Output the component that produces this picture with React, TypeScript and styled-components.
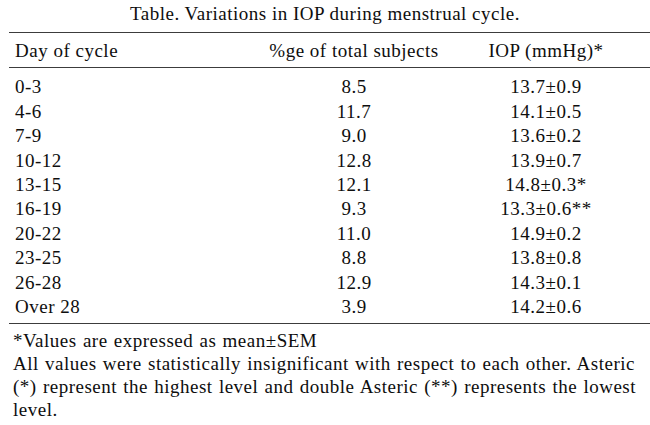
import React from "react";
import styled, { createGlobalStyle } from "styled-components";

const GlobalStyle = createGlobalStyle`
  html, body {
    margin: 0;
    padding: 0;
    background: #ffffff;
  }
  body {
    font-family: "Liberation Serif", "Times New Roman", serif;
    color: #0e0e0e;
  }
`;

const Page = styled.div`
  width: 650px;
  height: 425px;
  overflow: hidden;
  padding-top: 3px;
  box-sizing: border-box;
  font-size: 19px;
  letter-spacing: 0.5px;
`;

const Title = styled.div`
  text-align: center;
  line-height: 22px;
  height: 22px;
  white-space: nowrap;
`;

const Table = styled.div`
  margin-left: 9px;
  margin-top: 7px;
`;

const Grid = styled.div`
  display: grid;
  grid-template-columns: 245px 188px 196px;
  padding-left: 6px;
  line-height: 24.4px;
  white-space: nowrap;
`;

const HeadRow = styled(Grid)`
  border-top: 1.5px solid #3c3c3c;
  border-bottom: 1.5px solid #3c3c3c;
  padding-top: 6px;
  padding-bottom: 4px;
`;

const Body = styled.div`
  padding-top: 7px;
  padding-bottom: 4px;
  border-bottom: 1.5px solid #3c3c3c;
`;

const Cell = styled.div<{ $align?: "left" | "center" }>`
  text-align: ${(p) => p.$align ?? "left"};
`;

const Notes = styled.div`
  padding-left: 13px;
  padding-top: 6px;
  line-height: 22.7px;
  word-spacing: 1px;
`;

const NoteLine = styled.div`
  white-space: nowrap;
`;

const rows: [string, string, string][] = [
  ["0-3", "8.5", "13.7±0.9"],
  ["4-6", "11.7", "14.1±0.5"],
  ["7-9", "9.0", "13.6±0.2"],
  ["10-12", "12.8", "13.9±0.7"],
  ["13-15", "12.1", "14.8±0.3*"],
  ["16-19", "9.3", "13.3±0.6**"],
  ["20-22", "11.0", "14.9±0.2"],
  ["23-25", "8.8", "13.8±0.8"],
  ["26-28", "12.9", "14.3±0.1"],
  ["Over 28", "3.9", "14.2±0.6"],
];

export default function App() {
  return (
    <>
      <GlobalStyle />
      <Page>
        <Title>Table. Variations in IOP during menstrual cycle.</Title>
        <Table>
          <HeadRow>
            <Cell>Day of cycle</Cell>
            <Cell $align="center">%ge of total subjects</Cell>
            <Cell $align="center">IOP (mmHg)*</Cell>
          </HeadRow>
          <Body>
            {rows.map(([day, pct, iop]) => (
              <Grid key={day}>
                <Cell>{day}</Cell>
                <Cell $align="center">{pct}</Cell>
                <Cell $align="center">{iop}</Cell>
              </Grid>
            ))}
          </Body>
        </Table>
        <Notes>
          <NoteLine>*Values are expressed as mean±SEM</NoteLine>
          <NoteLine>
            All values were statistically insignificant with respect to each other. Asteric
          </NoteLine>
          <NoteLine>
            (*) represent the highest level and double Asteric (**) represents the lowest
          </NoteLine>
          <NoteLine>level.</NoteLine>
        </Notes>
      </Page>
    </>
  );
}
